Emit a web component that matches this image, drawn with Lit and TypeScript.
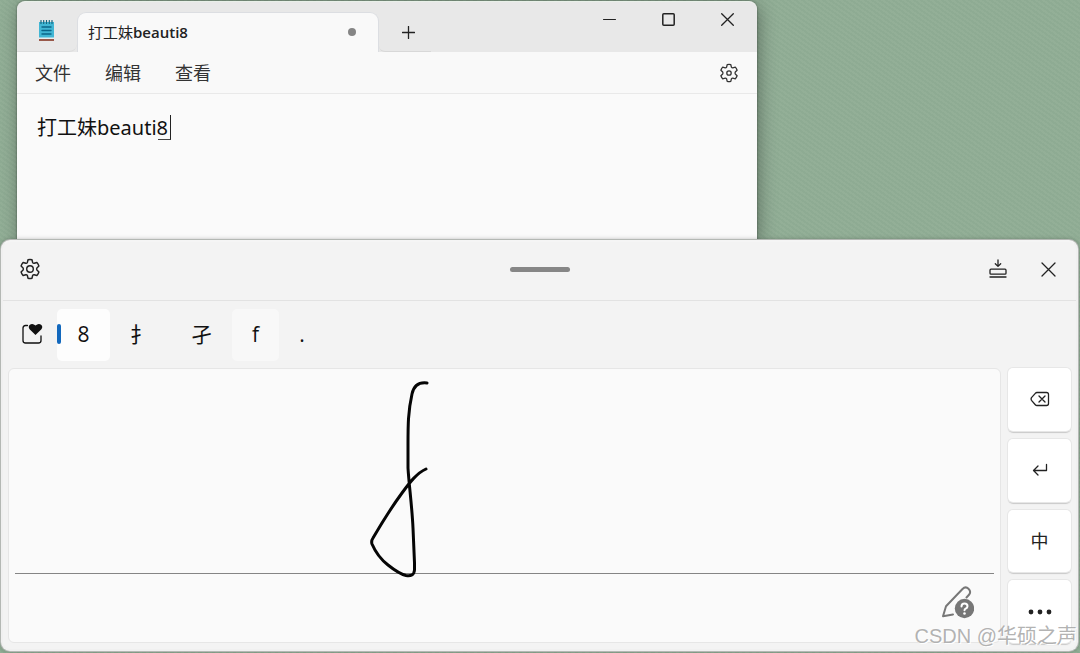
import { LitElement, html, css, svg } from "lit";
import { customElement, state } from "lit/decorators.js";
import { classMap } from "lit/directives/class-map.js";

const base = css`
  * { box-sizing: border-box; }
  button {
    margin: 0; padding: 0; border: 0; background: none; color: inherit;
    font: inherit; display: flex; align-items: center; justify-content: center;
    cursor: default;
  }
  svg { display: block; flex: none; fill: none; stroke: currentColor; stroke-width: 1.3; stroke-linecap: round; stroke-linejoin: round; }
`;

const gear = svg`
  <path d="M8.2 1.6 Q10 1.2 11.8 1.6 L12.4 4.1 Q12.9 4.9 13.8 4.8 L16.3 4.1 Q17.5 5.4 18.1 7.2 L16.3 9 Q15.7 10 16.3 11 L18.1 12.8 Q17.5 14.6 16.3 15.9 L13.8 15.2 Q12.9 15.1 12.4 15.9 L11.8 18.4 Q10 18.8 8.2 18.4 L7.6 15.9 Q7.1 15.1 6.2 15.2 L3.7 15.9 Q2.5 14.6 1.9 12.8 L3.7 11 Q4.3 10 3.7 9 L1.9 7.2 Q2.5 5.4 3.7 4.1 L6.2 4.8 Q7.1 4.9 7.6 4.1 Z"/>`;

@customElement("notepad-window")
class NotepadWindow extends LitElement {
  @state() private text = "打工妹beauti8";

  static styles = [base, css`
    :host {
      display: flex; flex-direction: column; background: #fafafa; color: #222;
      border-radius: 8px 8px 0 0; border-top: 1px solid #e9f0e9;
      box-shadow: 0 0 2px rgba(0, 0, 0, .5), 2px 4px 18px rgba(0, 0, 0, .35);
    }
    .title { display: flex; height: 50px; background: #e8e8e8; border-radius: 8px 8px 0 0; }
    .app { width: 60px; display: flex; align-items: center; justify-content: center; padding-top: 8px; border-bottom: 1px solid #dcdcdc; border-radius: 8px 0 8px 0; }
    .app svg { stroke: none; }
    .tab {
      width: 302px; margin-top: 10px; padding: 0 22px 2px 10px; background: #f9f9f9;
      border: 1px solid #dcdee2; border-bottom: 0; border-radius: 9px 9px 0 0;
      display: flex; align-items: center; justify-content: space-between;
      font-size: 15px; line-height: 20px; font-weight: 600;
    }
    .cjk { font-weight: 400; }
    .dot { width: 8px; height: 8px; border-radius: 50%; background: #858585; }
    .add { width: 52px; padding: 12px 0 0 6px; border-bottom: 1px solid #d8d8d8; border-radius: 0 0 0 6px; }
    .controls { margin-left: auto; display: flex; align-items: flex-start; }
    .controls button { width: 59px; height: 34px; }
    .menu { display: flex; align-items: center; height: 42px; padding: 0 18px; background: #f9f9f9; border-bottom: 1px solid #e9e9e9; font-size: 18px; line-height: 24px; gap: 34px; color: #333; }
    .settings { margin-left: auto; }
    .editor { position: relative; flex: 1; display: flex; }
    textarea {
      flex: 1; border: 0; outline: 0; resize: none; overflow: hidden; background: none;
      padding: 20px; font-family: "Noto Sans", "Noto Sans CJK SC", sans-serif;
      font-size: 20px; line-height: 28px; color: #111;
    }
    .caret { position: absolute; left: 141px; top: 21px; width: 13px; height: 25px; border-right: 1px solid #222; border-bottom: 1px solid #444; }
  `];

  render() {
    return html`
      <header class="title">
        <div class="app">
          <svg width="18" height="22" viewBox="0 0 18 22" aria-hidden="true">
            <rect x="1" y="2" width="15" height="17" fill="#42b6d4"/>
            <rect x="1" y="18.500" width="15" height="2.500" fill="#99594a"/>
            <rect x="1" y="17.500" width="15" height="1.500" fill="#e6eef0"/>
            <path d="M3 0.500v3M5.700 .5v3M8.500 .5v3M11.300 .5v3M14 .5v3" stroke="#176680" stroke-width="1.200"/>
            <path d="M4 7h9M4 10.500h9M4 14h9" stroke="#0b6588" stroke-width="1.400"/>
          </svg>
        </div>
        <div class="tab">
          <span><span class="cjk">打工妹</span>beauti8</span>
          <span class="dot"></span>
        </div>
        <button class="add" aria-label="新建标签页"><svg width="13" height="13" viewBox="0 0 13 13"><path d="M6.500 .5v12M.5 6.500h12"/></svg></button>
        <div class="controls">
          <button aria-label="最小化"><svg width="13" height="13" viewBox="0 0 13 13"><path d="M.5 6.500h12" stroke-width="1"/></svg></button>
          <button aria-label="最大化"><svg width="13" height="13" viewBox="0 0 13 13"><rect x=".8" y=".8" width="11.400" height="11.400" rx="1" stroke-width="1.500"/></svg></button>
          <button aria-label="关闭"><svg width="13" height="13" viewBox="0 0 13 13"><path d="M.7 .7l11.600 11.600M12.300 .7L.7 12.300"/></svg></button>
        </div>
      </header>
      <nav class="menu">
        <button>文件</button><button>编辑</button><button>查看</button>
        <button class="settings" aria-label="设置"><svg width="20" height="20" viewBox="0 0 20 20">${gear}<circle cx="10" cy="10" r="2.200"/></svg></button>
      </nav>
      <div class="editor">
        <textarea aria-label="文本编辑器" spellcheck="false" .value=${this.text}
          @input=${(e: Event) => (this.text = (e.target as HTMLTextAreaElement).value)}></textarea>
        <span class="caret"></span>
      </div>`;
  }
}

@customElement("handwriting-panel")
class HandwritingPanel extends LitElement {
  @state() private chosen = "8";

  private candidates = [
    { text: "8", size: "" },
    { text: "扌", size: "wide" },
    { text: "孑", size: "wide" },
    { text: "f", size: "raised" },
    { text: ".", size: "narrow" },
  ];

  static styles = [base, css`
    :host {
      display: flex; flex-direction: column; background: #f3f3f3; color: #222;
      border: 2px solid #f0f0f0; border-top-color: #f5f5f5; border-radius: 9px;
      box-shadow: 0 0 0 1px #b4b8b4, 0 0 5px rgba(0, 0, 0, .35);
    }
    .bar { display: grid; grid-template-columns: 1fr auto 1fr; align-items: center; height: 59px; padding: 0 16px 4px; border-bottom: 1px solid #e2e2e2; }
    .bar > button { justify-self: start; }
    .grip { width: 60px; height: 5px; border-radius: 3px; background: #868686; }
    .actions { display: flex; justify-content: flex-end; align-items: center; gap: 34px; padding-right: 4px; }
    .candidates { display: flex; align-items: center; height: 67px; padding-left: 17px; font-size: 21px; line-height: 28px; color: #111; }
    .sticker { width: 24px; height: 30px; margin-right: 13px; padding-bottom: 2px; }
    .cand { position: relative; width: 53px; height: 52px; padding-bottom: 2px; border-radius: 5px; }
    .wide { width: 61px; }
    .narrow { width: 46px; }
    .raised { width: 47px; background: #f8f8f8; }
    .on { background: #fdfdfd; }
    .on::before { content: ""; position: absolute; left: 0; top: 15px; width: 4px; height: 20px; border-radius: 2px; background: #1268bd; }
    .work { flex: 1; display: flex; gap: 7px; padding: 0 5px 6px; min-height: 0; }
    .board { position: relative; flex: 1; display: flex; flex-direction: column; padding: 0 6px; background: #fafafa; border: 1px solid #e6e6e6; border-radius: 6px; }
    .ink { flex: 1; border-bottom: 1px solid #858585; }
    .stroke { position: absolute; left: 355px; top: 8px; stroke: #050505; stroke-width: 3; }
    .foot { height: 68px; display: flex; justify-content: flex-end; align-items: flex-start; padding: 11px 20px 0; color: #777; }
    .keys { width: 63px; display: grid; grid-auto-rows: 1fr; gap: 8px; font-size: 18px; line-height: 24px; }
    .keys button { background: #fff; border-radius: 5px; box-shadow: 0 0 0 1px #e7e7e7, 0 2px 1px #c9c9c9; }
  `];

  render() {
    return html`
      <header class="bar">
        <button aria-label="设置"><svg width="22" height="22" viewBox="0 0 20 20">${gear}<circle cx="10" cy="10" r="3"/></svg></button>
        <div class="grip"></div>
        <div class="actions">
          <button aria-label="停靠"><svg width="18" height="20" viewBox="0 0 18 20"><path d="M9 1v6M6.300 4.700L9 7.400l2.700-2.700"/><rect x="1" y="10.200" width="16" height="5" rx="1"/><path d="M1 18h16"/></svg></button>
          <button aria-label="关闭"><svg width="15" height="15" viewBox="0 0 15 15"><path d="M1 1l13 13M14 1L1 14"/></svg></button>
        </div>
      </header>
      <div class="candidates">
        <button class="sticker" aria-label="表情"><svg width="22" height="22" viewBox="0 0 22 22"><path d="M6.500 2.500H4.500Q2 2.500 2 5v12.500Q2 20 4.500 20h13Q20 20 20 17.500v-4.500" stroke-width="1.300"/><path d="M14.500 12L8.600 6.300Q6.900 4 8.600 2 11.500-.3 14.500 2.600 17.500-.3 20.400 2 22.100 4 20.400 6.300z" fill="currentColor" stroke="none"/></svg></button>
        ${this.candidates.map((c) => html`
          <button class=${classMap({ cand: true, [c.size || "plain"]: true, on: c.text === this.chosen })}
            @click=${() => (this.chosen = c.text)}>${c.text}</button>`)}
      </div>
      <div class="work">
        <section class="board">
          <div class="ink"></div>
          <svg class="stroke" width="70" height="204" viewBox="364 377 70 204" aria-hidden="true">
            <path d="M427 383C419 382 414 385 412 394C408 412 408 425 408 445V468C409 485 412 506 413 528L414.500 563V570C414 576 410 576 406 575.500C400 574 393 569 388 565C379 558 375 551 372 544Q371 541 373 538C380 526 391 508 402 493C410 482 417 473 426 469"/>
          </svg>
          <div class="foot">
            <button aria-label="手写帮助"><svg width="34" height="34" viewBox="0 0 34 34"><path d="M13 29.500l-10 1.700 3-10L22.500 4Q25.500 1 28.500 3.700 31.500 6.500 29 9.800L26.500 12.500" stroke-width="2"/><circle cx="24.500" cy="23.500" r="9.700" fill="currentColor" stroke="none"/><path d="M21.500 21.500Q21.500 18.500 24.500 18.500 27.500 18.500 27.500 21.200 27.500 22.700 25.700 23.600 24.500 24.200 24.500 25.300" stroke="#fff" stroke-width="2"/><circle cx="24.500" cy="28.500" r="1.300" fill="#fff" stroke="none"/></svg></button>
          </div>
        </section>
        <div class="keys">
          <button aria-label="退格"><svg width="20" height="16" viewBox="0 0 20 16"><path d="M7 1.500h9.500Q18.500 1.500 18.500 3.500v9Q18.500 14.500 16.500 14.500H7Q6 14.500 5.300 13.700L1.500 9.300Q.7 8 1.500 6.700L5.300 2.300Q6 1.500 7 1.500zM9 5l6 6M15 5l-6 6"/></svg></button>
          <button aria-label="回车"><svg width="16" height="14" viewBox="0 0 16 14"><path d="M14.500 1.500v6H1.500M6 3L1.500 7.500 6 12"/></svg></button>
          <button aria-label="中文输入">中</button>
          <button aria-label="更多"><svg width="24" height="6" viewBox="0 0 24 6"><g fill="currentColor" stroke="none"><circle cx="3" cy="3" r="2.400"/><circle cx="12" cy="3" r="2.400"/><circle cx="21" cy="3" r="2.400"/></g></svg></button>
        </div>
      </div>`;
  }
}

@customElement("app-root")
class AppRoot extends LitElement {
  static styles = css`
    :host {
      position: relative; box-sizing: border-box; display: flex; flex-direction: column; min-height: 100vh; overflow: hidden;
      padding: 1px 2px 2px 1px;
      font-family: "Open Sans", "Noto Sans CJK SC", sans-serif;
      background: repeating-linear-gradient(35deg, #93af97 0 2px, #8eab93 2px 4px);
    }
    notepad-window { box-sizing: border-box; height: 239px; width: 740px; max-width: calc(100% - 16px); margin-left: 16px; }
    handwriting-panel { flex: 1; position: relative; }
    .mark { position: absolute; right: 3px; bottom: 4px; font: 20px/26px "Liberation Sans", "Noto Sans CJK SC", sans-serif; color: rgba(165, 165, 165, .85); text-shadow: 1px 1px 0 #fff; white-space: nowrap; pointer-events: none; }
  `;

  render() {
    return html`
      <notepad-window></notepad-window>
      <handwriting-panel></handwriting-panel>
      <div class="mark">CSDN @华硕之声</div>`;
  }
}
